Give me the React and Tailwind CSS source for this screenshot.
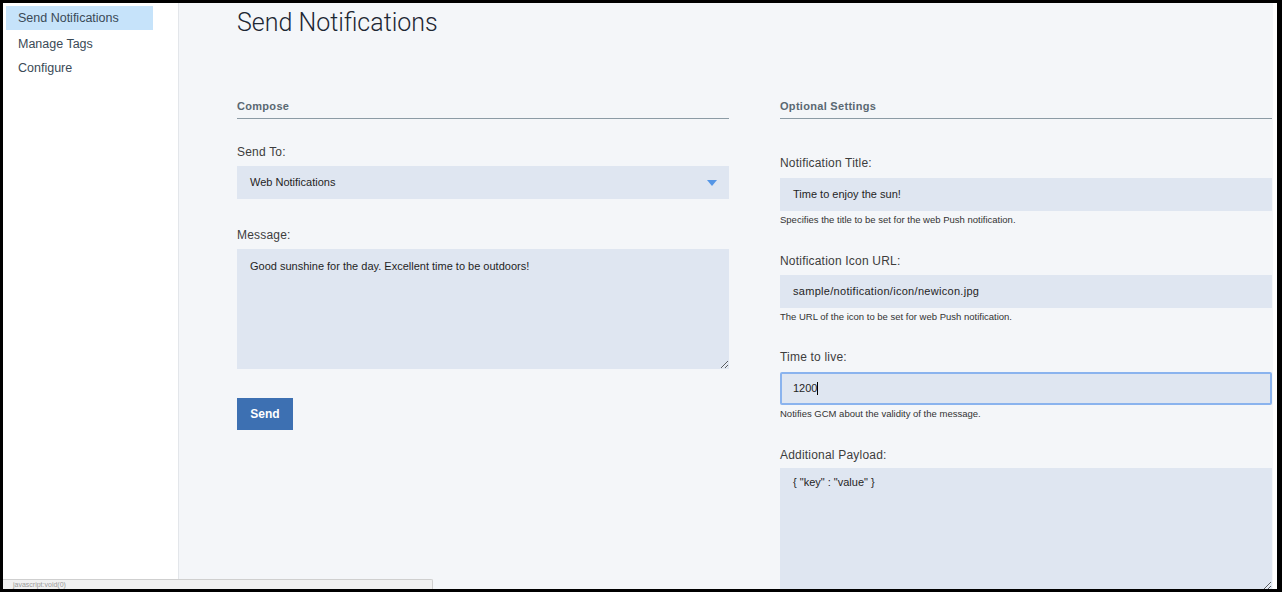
import React from "react";

const font = { fontFamily: '"Liberation Sans", Arial, sans-serif' };

function SectionHeading({ children }) {
  return (
    <div className="h-[21px] border-b border-[#8c9ba5] text-[11px] font-bold tracking-[0.3px] text-[#5a6872] leading-[16px]">
      {children}
    </div>
  );
}

function Label({ children, className = "" }) {
  return (
    <div className={"text-[12px] leading-[16px] text-[#3d3d3d] tracking-[0.2px] " + className}>
      {children}
    </div>
  );
}

function Field({ children, focused = false, className = "" }) {
  return (
    <div
      className={
        "h-[33px] flex items-center bg-[#dfe6f1] text-[11px] text-[#1f1f1f] " +
        (focused ? "border-2 border-[#8ab3ee] rounded-[2px] pl-[11px] " : "pl-[13px] ") +
        className
      }
    >
      {children}
    </div>
  );
}

function Help({ children }) {
  return <div className="mt-[2px] text-[9.5px] leading-[14px] text-[#333]">{children}</div>;
}

export default function App() {
  return (
    <div className="w-[1282px] h-[592px] bg-black pt-[3px] pl-[3px] pr-[5px] pb-[3px]" style={font}>
      <div className="flex h-full relative overflow-hidden">
        {/* sidebar */}
        <div className="w-[176px] shrink-0 bg-white border-r border-[#e3e6ea] pt-[3px] pl-[3px]">
          <div className="w-[147px] h-[24px] flex items-center pl-[12px] bg-[#c6e3fa] text-[12.5px] text-[#3a4a57]">
            Send Notifications
          </div>
          <div className="mt-[2px] h-[24px] flex items-center pl-[12px] text-[12.5px] text-[#3a4a57]">
            Manage Tags
          </div>
          <div className="h-[24px] flex items-center pl-[12px] text-[12.5px] text-[#3a4a57]">
            Configure
          </div>
        </div>

        {/* main */}
        <div className="flex-1 flex bg-[#f4f6f9]">
          <div className="flex-1 pl-[58px] pt-[5px]">
            <h1
              className="text-[25px] leading-[30px] font-light text-[#1d2733]"
              style={{ fontFamily: 'Roboto, "Liberation Sans", sans-serif' }}
            >
              Send Notifications
            </h1>

            <div className="flex gap-[51px] mt-[60px]">
              {/* compose */}
              <div className="w-[492px]">
                <SectionHeading>Compose</SectionHeading>
                <Label className="mt-[25px]">Send To:</Label>
                <Field className="mt-[6px] justify-between pr-[12px]">
                  <span>Web Notifications</span>
                  <svg width="10" height="6" viewBox="0 0 10 6">
                    <path d="M0 0 L10 0 L5 6 Z" fill="#5596e6" />
                  </svg>
                </Field>
                <Label className="mt-[28px]">Message:</Label>
                <textarea
                  readOnly
                  defaultValue="Good sunshine for the day. Excellent time to be outdoors!"
                  className="mt-[6px] block w-full h-[120px] bg-[#dfe6f1] text-[11px] text-[#1f1f1f] px-[13px] py-[9px] outline-none"
                />
                <button className="mt-[29px] w-[56px] h-[32px] bg-[#3d70b2] text-white text-[12px] font-bold">
                  Send
                </button>
              </div>

              {/* optional */}
              <div className="w-[492px]">
                <SectionHeading>Optional Settings</SectionHeading>
                <Label className="mt-[36px]">Notification Title:</Label>
                <Field className="mt-[7px]">Time to enjoy the sun!</Field>
                <Help>Specifies the title to be set for the web Push notification.</Help>

                <Label className="mt-[26px]">Notification Icon URL:</Label>
                <Field className="mt-[6px] tracking-[0.3px]">sample/notification/icon/newicon.jpg</Field>
                <Help>The URL of the icon to be set for web Push notification.</Help>

                <Label className="mt-[25px]">Time to live:</Label>
                <Field focused className="mt-[7px]">
                  1200<span className="inline-block w-[1px] h-[13px] bg-black" />
                </Field>
                <Help>Notifies GCM about the validity of the message.</Help>

                <Label className="mt-[26px]">Additional Payload:</Label>
                <textarea
                  readOnly
                  defaultValue={'{ "key" : "value" }'}
                  className="mt-[5px] block w-full h-[122px] bg-[#dfe6f1] text-[11px] text-[#1f1f1f] px-[13px] py-[6px] outline-none"
                />
              </div>
            </div>
          </div>
          <div className="w-[4px] bg-white shrink-0" />
        </div>

        {/* browser status bar */}
        <div className="absolute left-0 bottom-0 w-[430px] h-[10px] bg-[#f0f0f0] border-t border-r border-[#cfcfcf] rounded-tr-[2px] flex items-center">
          <span className="pl-[10px] text-[7px] leading-[8px] text-[#9a9a9a] whitespace-nowrap">
            javascript:void(0)
          </span>
        </div>
      </div>
    </div>
  );
}
